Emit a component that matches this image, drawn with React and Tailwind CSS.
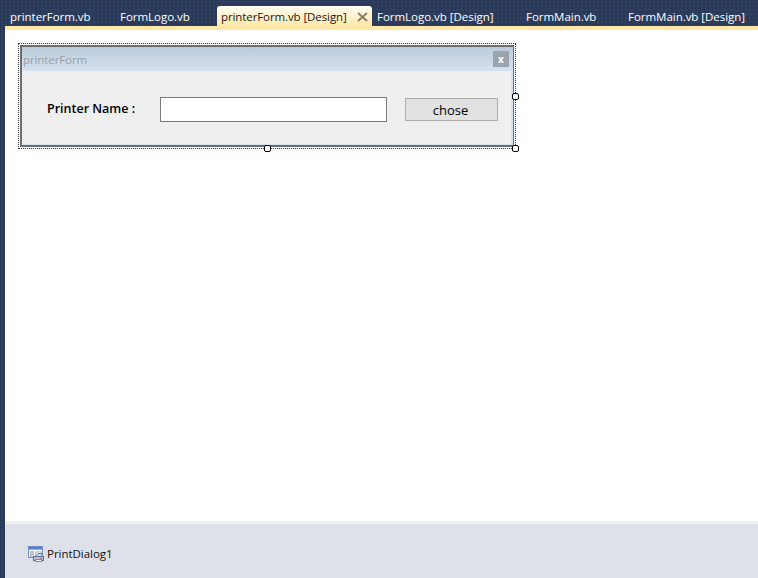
import React from "react";

const tabs = [
  { t: "printerForm.vb", w: "w-[110px]", p: "pl-[5px]" },
  { t: "FormLogo.vb", w: "w-[102px]", p: "pl-[5px]" },
  { t: "printerForm.vb [Design]", active: true },
  { t: "FormLogo.vb [Design]", w: "w-[149px]", p: "pl-[5px]" },
  { t: "FormMain.vb", w: "w-[102px]", p: "pl-[5px]" },
  { t: "FormMain.vb [Design]", w: "w-[125px]", p: "pl-[5px]" },
];

function Handle({ className }) {
  return <span className={"absolute w-[7px] h-[7px] bg-white border border-black rounded-[2px] " + className} />;
}

function PrinterIcon() {
  return (
    <svg width="16" height="16" viewBox="0 0 16 16" className="block">
      <rect x="0.5" y="0.5" width="14" height="11" fill="#eef3fa" stroke="#6f8fc0" />
      <rect x="1" y="1" width="13" height="2.5" fill="#4f7fd0" />
      <path d="M2 6h4M2 8h4M2 10h3" stroke="#8a8f99" strokeWidth="1" />
      <path d="M8 6h5v5H8z" fill="#fff" stroke="#aab4c4" />
      <path d="M7 10.5l3-3h4v2" fill="#c8d4e4" stroke="#6d7f98" />
      <rect x="5.5" y="10.5" width="10" height="4" fill="#b7c6da" stroke="#5f7390" />
      <rect x="7.5" y="13.5" width="6" height="2" fill="#fff" stroke="#7a8aa2" />
      <rect x="12.5" y="12" width="1.5" height="1" fill="#d04040" />
    </svg>
  );
}

export default function App() {
  return (
    <div className="w-[758px] h-[578px] overflow-hidden flex flex-col bg-[#2a3a58] bg-[radial-gradient(#304263_1px,transparent_1px)] bg-[length:4px_4px] font-['Open_Sans','Liberation_Sans',sans-serif] text-[11.5px] tracking-[-0.03px]">
      <div className="h-[26px] flex items-end pl-[5px] shrink-0">
        {tabs.map((tab) =>
          tab.active ? (
            <div key={tab.t} className="w-[155px] h-[20px] flex items-center justify-between pl-[4px] pr-[4px] pt-[1px] rounded-t-[3px] bg-gradient-to-b from-[#fffcf4] to-[#ffe8a6] text-[#1a1a1a]">
              <span className="whitespace-nowrap tracking-[-0.1px]">{tab.t}</span>
              <svg width="11" height="10" viewBox="0 0 11 10" className="mt-[1px]">
                <path d="M1 1l9 8M10 1l-9 8" stroke="#857c66" strokeWidth="1.8" />
              </svg>
            </div>
          ) : (
            <div key={tab.t} className={"h-[20px] flex items-center pt-[1px] text-white whitespace-nowrap " + tab.w + " " + tab.p}>
              {tab.t}
            </div>
          )
        )}
      </div>
      <div className="flex-1 ml-[5px] flex flex-col min-h-0">
        <div className="h-[4px] bg-[#ffe8a6] shrink-0" />
        <div className="flex-1 bg-white pl-[13px] pt-[13px]">
          <div className="relative w-[498px] h-[106px] border border-dotted border-[#333] p-[1px]">
            <div className="h-full border-y-2 border-l-2 border-r border-[#6d6d6d] bg-[#d6e2f0] flex flex-col">
              <div className="h-[24px] flex items-center justify-between pl-[1px] pr-[4px] bg-gradient-to-b from-[#bccbdb] to-[#d5e2f0] shrink-0">
                <span className="text-[#9a9fa6] tracking-[-0.1px] pt-[1px]">printerForm</span>
                <span className="w-[16px] h-[16px] bg-[#9aa4af] text-white text-[10px] font-bold flex items-center justify-center leading-none">x</span>
              </div>
              <div className="flex-1 mr-[2px] mb-[1px] bg-[#efefef] flex items-start">
                <span className="ml-[25px] mt-[29px] w-[113px] text-[12.5px] tracking-normal font-semibold text-black whitespace-nowrap">Printer Name :</span>
                <div className="mt-[26px] w-[227px] h-[25px] bg-white border border-[#7a7a7a]" />
                <div className="ml-[18px] mt-[27px] w-[93px] h-[23px] pt-[2px] pr-[2px] bg-[#e1e1e1] border border-[#adadad] text-[13px] tracking-normal text-black font-medium flex items-center justify-center">chose</div>
              </div>
            </div>
            <Handle className="left-[493px] top-[49px]" />
            <Handle className="left-[245px] top-[101px]" />
            <Handle className="left-[493px] top-[101px]" />
          </div>
        </div>
        <div className="h-[3px] bg-[#f0f0f0] shrink-0" />
        <div className="h-[54px] pt-[5px] bg-[#dee1e9] shrink-0 flex items-center pl-[23px] gap-[3px] text-[#111]">
          <PrinterIcon />
          <span>PrintDialog1</span>
        </div>
      </div>
    </div>
  );
}
